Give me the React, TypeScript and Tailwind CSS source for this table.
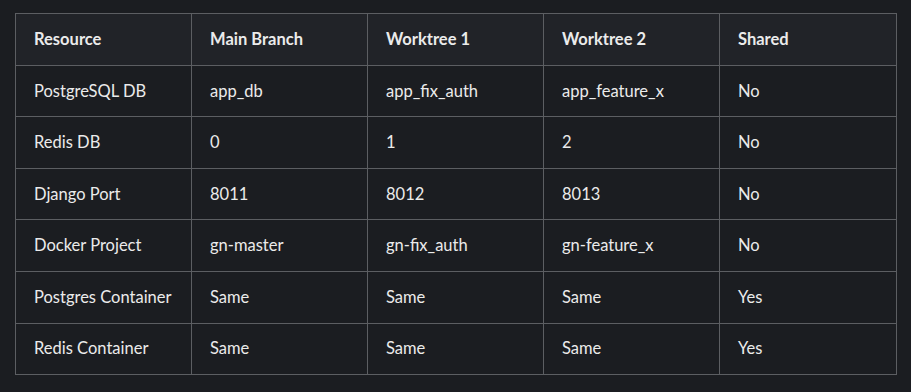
const headers = ["Resource", "Main Branch", "Worktree 1", "Worktree 2", "Shared"];

const rows = [
  ["PostgreSQL DB", "app_db", "app_fix_auth", "app_feature_x", "No"],
  ["Redis DB", "0", "1", "2", "No"],
  ["Django Port", "8011", "8012", "8013", "No"],
  ["Docker Project", "gn-master", "gn-fix_auth", "gn-feature_x", "No"],
  ["Postgres Container", "Same", "Same", "Same", "Yes"],
  ["Redis Container", "Same", "Same", "Same", "Yes"],
];

export default function App() {
  return (
    <div className="min-h-screen w-full bg-[#1b1d21] pt-[13px] pl-[15px] font-['Lato',sans-serif] text-[16.5px] text-[#ebebeb]">
      <table className="w-[881px] table-fixed border-collapse">
        <colgroup>
          <col className="w-[176px]" />
          <col className="w-[176px]" />
          <col className="w-[176px]" />
          <col className="w-[176px]" />
          <col className="w-[177px]" />
        </colgroup>
        <thead>
          <tr className="h-[51.6px] bg-[#212328]">
            {headers.map((h) => (
              <th key={h} className="border border-[#5c5e62] px-[18px] text-left font-bold">
                {h}
              </th>
            ))}
          </tr>
        </thead>
        <tbody>
          {rows.map((r) => (
            <tr key={r[0]} className="h-[51.6px]">
              {r.map((c, i) => (
                <td key={i} className="border border-[#5c5e62] px-[18px]">
                  {c}
                </td>
              ))}
            </tr>
          ))}
        </tbody>
      </table>
    </div>
  );
}
